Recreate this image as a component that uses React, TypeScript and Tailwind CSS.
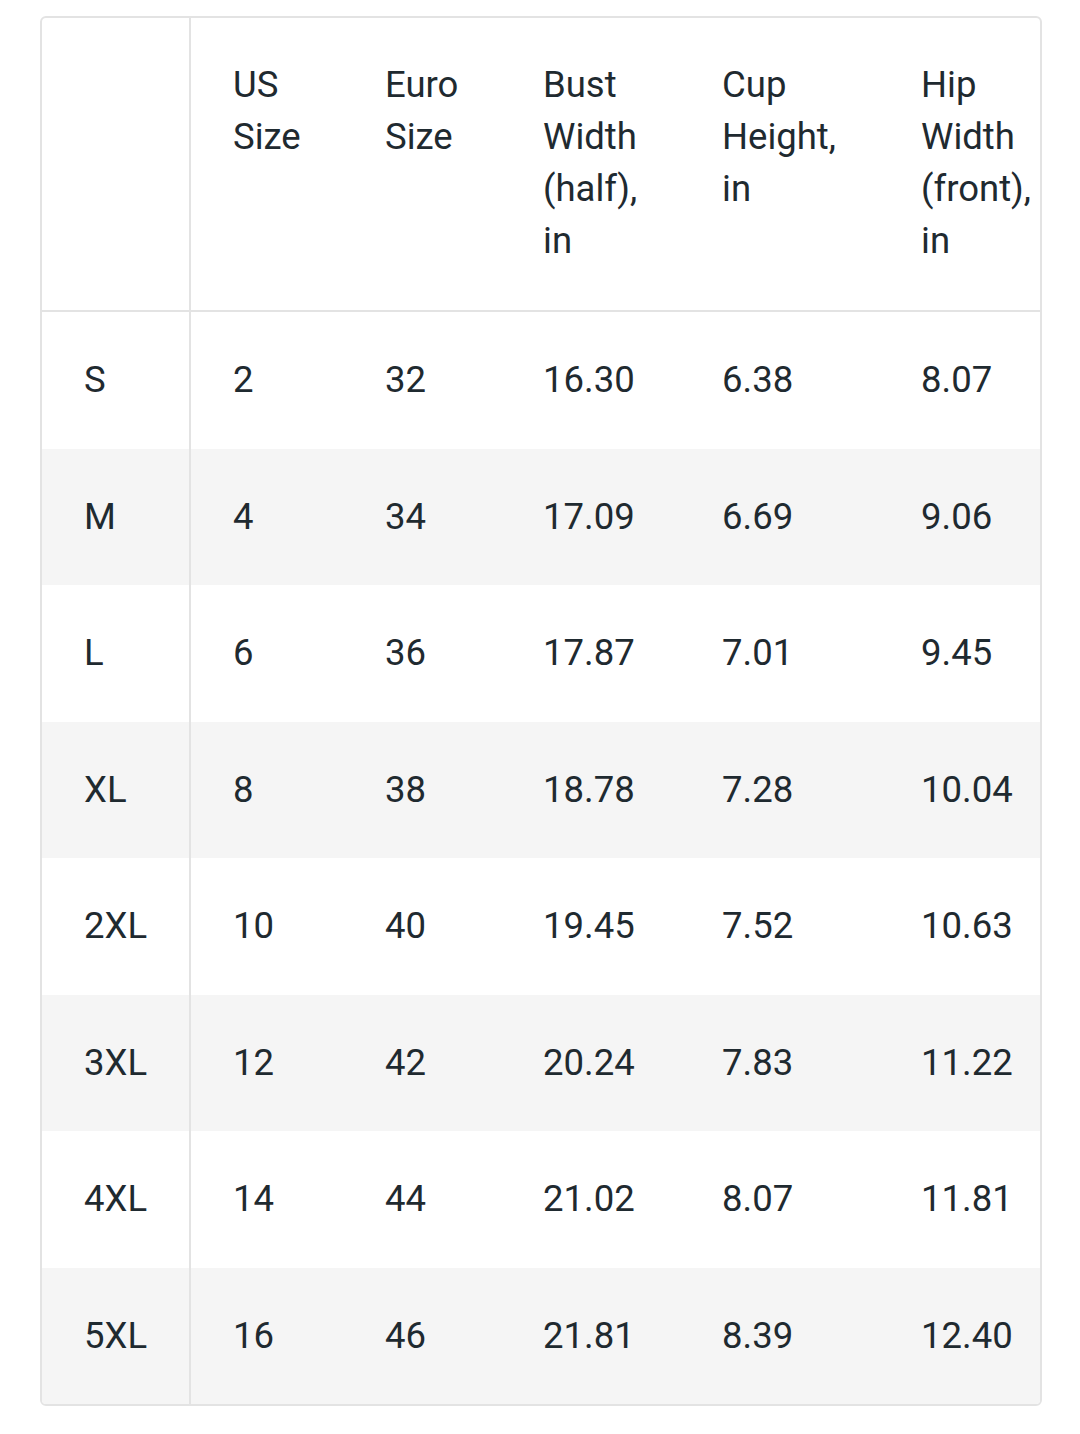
import React from "react";

const header: string[][] = [
  [],
  ["US", "Size"],
  ["Euro", "Size"],
  ["Bust", "Width", "(half),", "in"],
  ["Cup", "Height,", "in"],
  ["Hip", "Width", "(front),", "in"],
];

const rows: string[][] = [
  ["S", "2", "32", "16.30", "6.38", "8.07"],
  ["M", "4", "34", "17.09", "6.69", "9.06"],
  ["L", "6", "36", "17.87", "7.01", "9.45"],
  ["XL", "8", "38", "18.78", "7.28", "10.04"],
  ["2XL", "10", "40", "19.45", "7.52", "10.63"],
  ["3XL", "12", "42", "20.24", "7.83", "11.22"],
  ["4XL", "14", "44", "21.02", "8.07", "11.81"],
  ["5XL", "16", "46", "21.81", "8.39", "12.40"],
];

export default function App() {
  return (
    <div
      className="w-[1080px] h-[1434px] bg-white pt-[16px] pl-[40px]"
      style={{ fontFamily: "Roboto, 'Noto Sans', sans-serif" }}
    >
      <div className="w-[1002px] border-2 border-[#e3e3e3] rounded-[6px] overflow-hidden text-[36.5px] leading-[52px] text-[#1f2a30]">
        <div className="grid grid-cols-[149px_152px_158px_179px_199px_161px] border-b-2 border-[#e3e3e3]">
          {header.map((lines, i) => (
            <div
              key={i}
              className={
                i === 0
                  ? "border-r-2 border-[#e3e3e3] pl-[42px] pt-[41px] pb-[43px] h-[292px]"
                  : "pl-[42px] pt-[41px] pb-[43px] h-[292px] whitespace-nowrap"
              }
            >
              {lines.map((l, j) => (
                <div key={j}>{l}</div>
              ))}
            </div>
          ))}
        </div>
        {rows.map((r, ri) => (
          <div
            key={ri}
            className={
              "grid grid-cols-[149px_152px_158px_179px_199px_161px] h-[136.5px] " +
              (ri % 2 === 1 ? "bg-[#f5f5f5]" : "bg-white")
            }
          >
            {r.map((c, ci) => (
              <div
                key={ci}
                className={
                  ci === 0
                    ? "border-r-2 border-[#e3e3e3] pl-[42px] flex items-center"
                    : "pl-[42px] flex items-center"
                }
              >
                {c}
              </div>
            ))}
          </div>
        ))}
      </div>
    </div>
  );
}
